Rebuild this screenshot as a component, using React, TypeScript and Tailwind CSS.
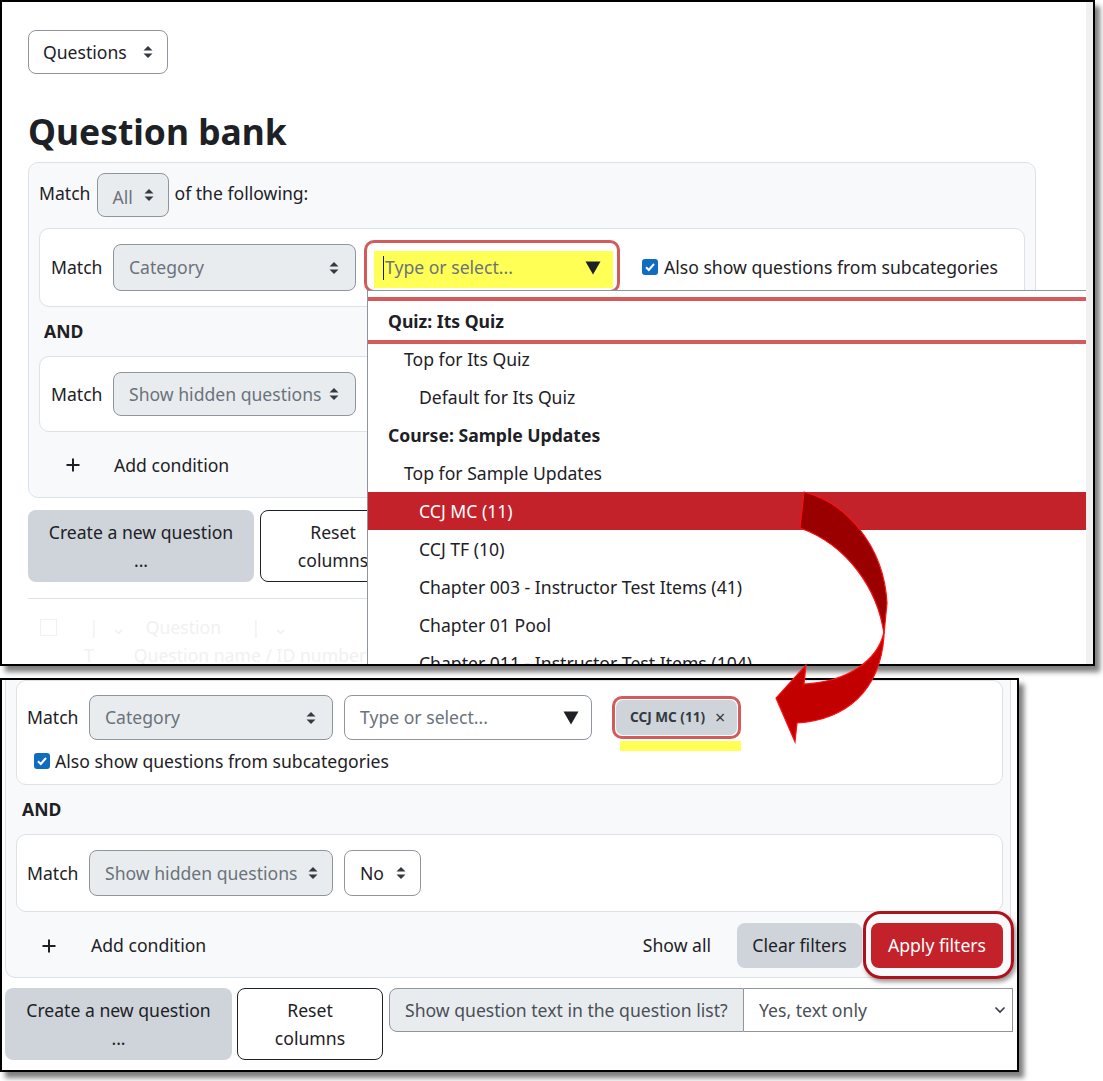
import React from "react";

function UpDown() {
  return (
    <svg width="10" height="14" viewBox="0 0 10 14" className="shrink-0">
      <path d="M5 1 L9.5 5.5 H0.5 Z" fill="#343a40" />
      <path d="M5 13 L9.5 8.5 H0.5 Z" fill="#343a40" />
    </svg>
  );
}

function Check() {
  return (
    <span className="w-[16px] h-[16px] rounded-[3px] bg-[#0f6cbf] flex items-center justify-center shrink-0">
      <svg width="12" height="12" viewBox="0 0 12 12">
        <path d="M2 6.3 L4.8 9 L10 3" stroke="#fff" strokeWidth="2" fill="none" />
      </svg>
    </span>
  );
}

function Plus() {
  return (
    <svg width="14" height="14" viewBox="0 0 14 14" className="shrink-0">
      <path d="M7 0.5 V13.5 M0.5 7 H13.5" stroke="#1d2125" strokeWidth="2" />
    </svg>
  );
}

function Triangle() {
  return (
    <svg width="16" height="14" viewBox="0 0 16 14" className="shrink-0">
      <path d="M0.5 0.5 H15.5 L8 13.5 Z" fill="#1d2125" />
    </svg>
  );
}

const dropdownItems: { label: string; indent: number; bold?: boolean; selected?: boolean }[] = [
  { label: "Quiz: Its Quiz", indent: 0, bold: true },
  { label: "Top for Its Quiz", indent: 1 },
  { label: "Default for Its Quiz", indent: 2 },
  { label: "Course: Sample Updates", indent: 0, bold: true },
  { label: "Top for Sample Updates", indent: 1 },
  { label: "CCJ MC (11)", indent: 2, selected: true },
  { label: "CCJ TF (10)", indent: 2 },
  { label: "Chapter 003 - Instructor Test Items (41)", indent: 2 },
  { label: "Chapter 01 Pool", indent: 2 },
  { label: "Chapter 011 - Instructor Test Items (104)", indent: 2 },
];

function TopShot() {
  return (
    <div className="w-[1095px] h-[666px] border-2 border-black bg-white shadow-[5px_6px_5px_rgba(0,0,0,0.5)] flex overflow-hidden">
      <div className="flex-1 relative pl-[26px] pt-[28px]">
        <div className="w-[140px] h-[44px] border border-[#8f959e] rounded-[8px] flex items-center justify-between pl-[14px] pr-[14px] text-[17.6px] text-[#1d2125]">
          Questions <UpDown />
        </div>
        <h1 className="mt-[34px] text-[35.4px] font-bold leading-[46px] text-[#1d2125]">Question bank</h1>

        {/* filter panel */}
        <div className="mt-[8px] w-[1008px] border border-[#dee2e6] rounded-[10px] bg-[#f8f9fa] p-[10px] text-[17.6px] text-[#1d2125]">
          <div className="flex items-center gap-[6px] h-[44px]">
            <span className="pb-[3px]">Match</span>
            <div className="w-[72px] h-[44px] bg-[#e9ecef] border border-[#8f959e] rounded-[8px] flex items-center justify-between pl-[15px] pr-[14px] text-[#6a737b]">
              <span className="pt-[4px]">All</span> <UpDown />
            </div>
            <span className="pb-[3px]">of the following:</span>
          </div>

          <div className="mt-[11px] bg-white border border-[#dee2e6] rounded-[10px] px-[11px] py-[15px] flex items-center">
            <span className="w-[52px]">Match</span>
            <div className="ml-[10px] w-[243px] h-[47px] bg-[#e9ecef] border border-[#8f959e] rounded-[8px] flex items-center justify-between pl-[15px] pr-[16px] text-[#6a737b]">
              Category <UpDown />
            </div>
            <div className="ml-[11px] relative w-[245px] h-[47px] bg-white">
              <div className="absolute left-[7px] top-[7px] right-[-1px] bottom-[3px] bg-[#ffff55]" />
              <div className="absolute -left-[3px] -top-[4px] w-[256px] h-[53px] border-[3px] border-[#d35b5b] rounded-[10px]" />
              <div className="relative h-full flex items-center pl-[16px] pr-[11px] text-[#6a737b]">
                <span className="w-px h-[24px] bg-[#1d2125] mr-[1px]" />
                <span className="flex-1">Type or select...</span>
                <Triangle />
              </div>
            </div>
            <div className="ml-[30px] flex items-center gap-[6px]">
              <Check />
              <span>Also show questions from subcategories</span>
            </div>
          </div>

          <div className="mt-[11px] mb-[11px] pl-[5px] font-bold leading-[27px]">AND</div>

          <div className="bg-white border border-[#dee2e6] rounded-[10px] px-[11px] py-[15px] flex items-center">
            <span className="w-[52px]">Match</span>
            <div className="ml-[10px] w-[243px] h-[44px] bg-[#e9ecef] border border-[#8f959e] rounded-[8px] flex items-center justify-between pl-[15px] pr-[16px] text-[#6a737b]">
              Show hidden questions <UpDown />
            </div>
            <div className="ml-[11px] w-[77px] h-[44px] bg-white border border-[#8f959e] rounded-[8px] flex items-center justify-between pl-[15px] pr-[14px]">
              No <UpDown />
            </div>
          </div>

          <div className="mt-[11px] h-[44px] flex items-center">
            <span className="ml-[27px]"><Plus /></span>
            <span className="ml-[34px]">Add condition</span>
          </div>
        </div>

        <div className="mt-[12px] flex gap-[6px] text-[17.6px] text-[#1d2125]">
          <div className="w-[226px] h-[72px] bg-[#ced4da] rounded-[8px] flex flex-col items-center justify-center leading-[28px]">
            <span>Create a new question</span>
            <span>...</span>
          </div>
          <div className="w-[146px] h-[72px] border border-[#1d2125] rounded-[8px] flex flex-col items-center justify-center leading-[28px]">
            <span>Reset</span>
            <span>columns</span>
          </div>
        </div>
        <div className="mt-[16px] w-[1008px] h-px bg-[#dee2e6]" />
        <div className="text-[17.6px] text-[#f1f1f1]">
          <div className="h-[28px] mt-[14px] flex items-center">
            <span className="ml-[12px] w-[17px] h-[17px] border border-[#f1f1f1]" />
            <span className="ml-[32px]">|</span>
            <span className="ml-[12px]">⌄</span>
            <span className="ml-[20px]">Question</span>
            <span className="ml-[30px]">|</span>
            <span className="ml-[12px]">⌄</span>
          </div>
          <div className="h-[28px] flex items-center">
            <span className="ml-[56px]">T</span>
            <span className="ml-[40px]">Question name / ID number</span>
          </div>
        </div>

        {/* open category dropdown */}
        <div className="absolute left-[365px] top-[288px] right-0 bottom-0 bg-white border-l border-t border-[#8f959e] pt-[11px] text-[17.6px] text-[#1d2125]">
          <div className="absolute left-0 right-0 top-[6px] h-[47px] border-y-4 border-[#d35b5b]" />
          {dropdownItems.map((it) => (
            <div
              key={it.label}
              className={
                "h-[38px] flex items-center whitespace-nowrap " +
                (it.selected ? "bg-[#c3222b] text-white " : "") +
                (it.bold ? "font-bold " : "") +
                (it.indent === 0 ? "pl-[20px]" : it.indent === 1 ? "pl-[36px]" : "pl-[51px]")
              }
            >
              {it.label}
            </div>
          ))}
        </div>
      </div>
      <div className="w-[7px] bg-[#f1f1f1]" />
    </div>
  );
}

function BottomShot() {
  return (
    <div className="mt-[12px] w-[1019px] h-[394px] border-2 border-black bg-white shadow-[5px_6px_5px_rgba(0,0,0,0.5)] overflow-hidden pl-[3px] text-[17.6px] text-[#1d2125]">
      <div className="w-[1006px] bg-[#f8f9fa] border-x border-b border-[#dee2e6] rounded-b-[10px] pl-[10px] pr-[7px] pb-[9px]">
        <div className="bg-white border border-[#dee2e6] rounded-[10px] px-[10px] pt-[14px] pb-[10px]">
          <div className="flex items-center h-[45px]">
            <span className="w-[52px]">Match</span>
            <div className="ml-[10px] w-[244px] h-[45px] bg-[#e9ecef] border border-[#8f959e] rounded-[8px] flex items-center justify-between pl-[15px] pr-[16px] text-[#6a737b]">
              Category <UpDown />
            </div>
            <div className="ml-[11px] w-[248px] h-[45px] bg-white border border-[#8f959e] rounded-[8px] flex items-center justify-between pl-[15px] pr-[12px] text-[#6a737b]">
              Type or select... <Triangle />
            </div>
            <div className="ml-[20px] relative">
              <div className="w-[129px] h-[43px] border-[3px] border-[#d35b5b] rounded-[10px] p-[1px]">
                <div className="h-full bg-[#ced4da] rounded-[7px] flex items-center pl-[14px] gap-[10px] text-[13.6px] font-bold text-[#343a40]">
                  <span>CCJ MC (11)</span>
                  <span className="text-[18px] font-normal leading-none pb-[2px]">×</span>
                </div>
              </div>
              <div className="absolute left-[8px] top-[45px] w-[121px] h-[10px] bg-[#ffff55]" />
            </div>
          </div>
          <div className="mt-[8px] h-[26px] ml-[7px] flex items-center gap-[5px]">
            <Check />
            <span>Also show questions from subcategories</span>
          </div>
        </div>

        <div className="mt-[11px] mb-[11px] pl-[6px] font-bold leading-[27px]">AND</div>

        <div className="bg-white border border-[#dee2e6] rounded-[10px] px-[10px] py-[15px] flex items-center">
          <span className="w-[52px]">Match</span>
          <div className="ml-[10px] w-[244px] h-[46px] bg-[#e9ecef] border border-[#8f959e] rounded-[8px] flex items-center justify-between pl-[15px] pr-[14px] text-[#6a737b]">
            Show hidden questions <UpDown />
          </div>
          <div className="ml-[11px] w-[77px] h-[46px] bg-white border border-[#8f959e] rounded-[8px] flex items-center justify-between pl-[15px] pr-[14px]">
            No <UpDown />
          </div>
        </div>

        <div className="mt-[11px] h-[45px] flex items-center">
          <span className="ml-[26px]"><Plus /></span>
          <span className="ml-[35px] flex-1">Add condition</span>
          <span className="px-[15px]">Show all</span>
          <div className="ml-[11px] w-[125px] h-[45px] bg-[#ced4da] rounded-[8px] flex items-center justify-center">
            Clear filters
          </div>
          <div className="ml-[9px] relative">
            <div className="absolute -left-[8px] -top-[12px] -right-[11px] -bottom-[11px] border-[3px] border-[#b0101a] rounded-[18px] shadow-[2px_3px_4px_rgba(0,0,0,0.4)]" />
            <div className="relative w-[132px] h-[45px] bg-[#c3222b] rounded-[8px] flex items-center justify-center text-white">
              Apply filters
            </div>
          </div>
        </div>
      </div>

      <div className="mt-[10px] flex">
        <div className="w-[227px] h-[72px] bg-[#ced4da] rounded-[8px] flex flex-col items-center justify-center leading-[28px]">
          <span>Create a new question</span>
          <span>...</span>
        </div>
        <div className="ml-[5px] w-[146px] h-[72px] border border-[#1d2125] rounded-[8px] flex flex-col items-center justify-center leading-[28px]">
          <span>Reset</span>
          <span>columns</span>
        </div>
        <div className="ml-[6px] flex h-[44px]">
          <div className="w-[355px] bg-[#e9ecef] border border-[#8f959e] rounded-l-[8px] flex items-center pl-[15px] text-[#495057]">
            Show question text in the question list?
          </div>
          <div className="w-[269px] bg-white border border-l-0 border-[#8f959e] flex items-center justify-between pl-[15px] pr-[6px] text-[#495057]">
            Yes, text only
            <svg width="12" height="8" viewBox="0 0 12 8">
              <path d="M1.5 1.5 L6 6 L10.5 1.5" stroke="#343a40" strokeWidth="1.6" fill="none" />
            </svg>
          </div>
        </div>
      </div>
    </div>
  );
}

export default function App() {
  return (
    <div className="relative w-[1103px] h-[1081px] bg-white overflow-hidden font-['Noto_Sans',sans-serif]">
      <TopShot />
      <BottomShot />
      {/* curved annotation arrow */}
      <svg className="absolute left-0 top-0 pointer-events-none" width="1103" height="1081" viewBox="0 0 1103 1081">
        <path
          d="M804 492 C845 502 884 545 887 603 L884 634 C878 590 848 545 800 528 Z"
          fill="#9b0000"
          stroke="#ff1010"
          strokeWidth="1.2"
        />
        <path
          d="M884 632 C878 660 848 682 804 684 L806 665 L776 698 L795 742 L797 723 C845 720 880 692 884 636 Z"
          fill="#c20000"
          stroke="#ff1010"
          strokeWidth="1.2"
        />
      </svg>
    </div>
  );
}
